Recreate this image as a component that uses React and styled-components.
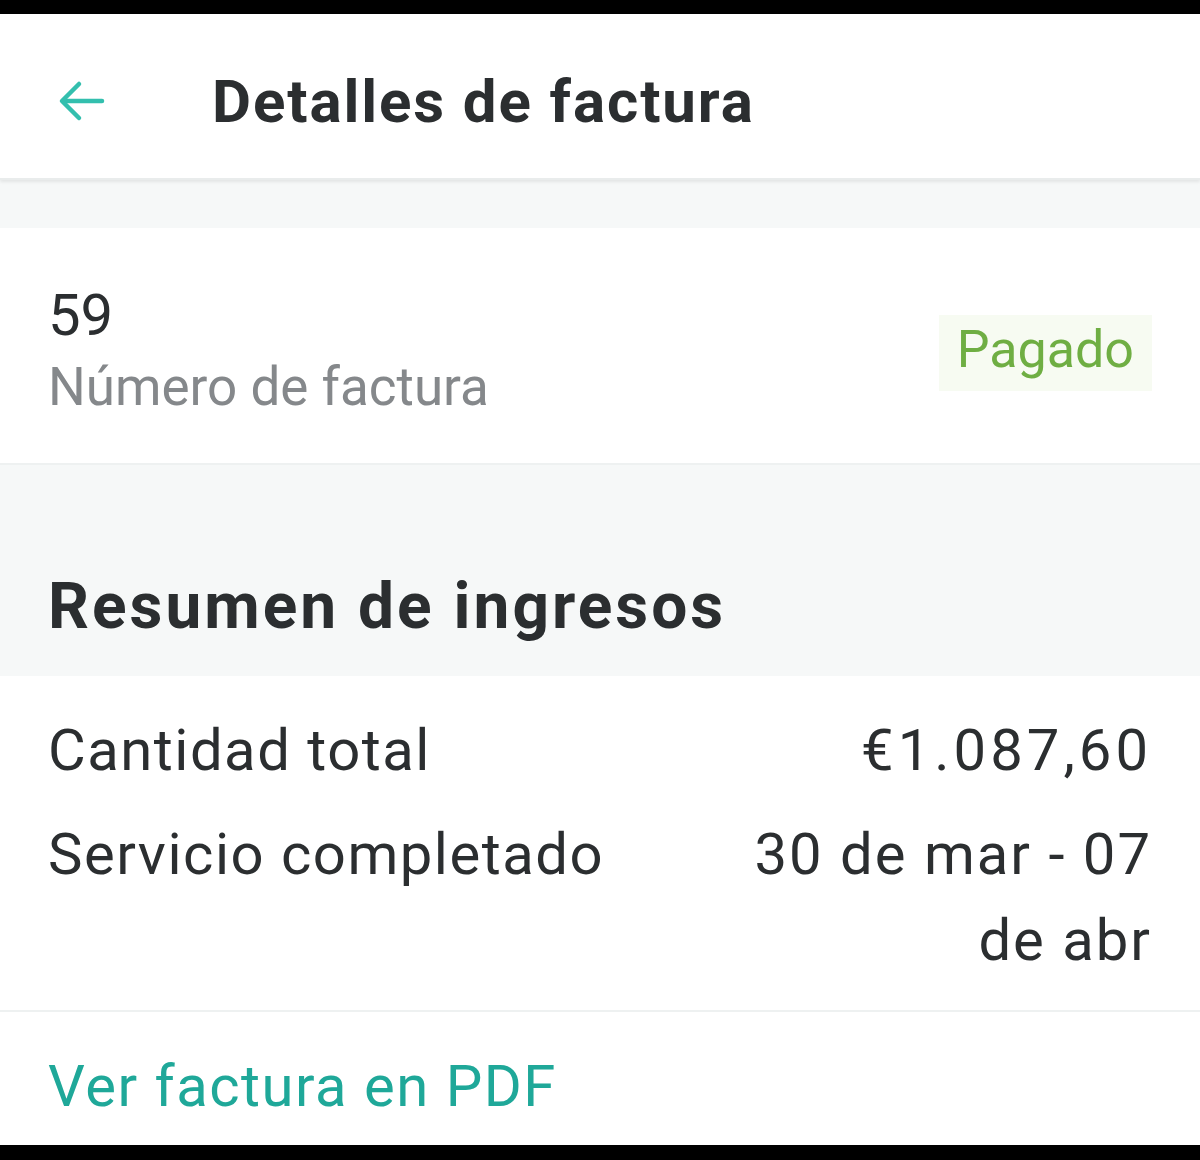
import React from "react"
import styled, { createGlobalStyle } from "styled-components"

const GlobalStyle = createGlobalStyle`
    html, body {
        margin: 0;
        padding: 0;
        background: #000;
    }
    body {
        font-family: Roboto, "Noto Sans", "Liberation Sans", sans-serif;
        -webkit-font-smoothing: antialiased;
    }
`;

const Frame = styled.div`
    width: 1200px;
    height: 1160px;
    background: #000;
    padding: 14px 0 15px;
    box-sizing: border-box;
`;

const Screen = styled.div`
    height: 100%;
    background: #fff;
    display: flex;
    flex-direction: column;
    overflow: hidden;
`;

//Cabecera
const Header = styled.header`
    height: 166px;
    flex-shrink: 0;
    display: flex;
    align-items: center;
    padding: 10px 48px 0 56px;
    background: #fff;
    box-shadow: 0 2px 3px rgba(0, 0, 0, 0.08);
    border-bottom: 2px solid #e9ecec;
    box-sizing: border-box;
    position: relative;
    z-index: 1;
`;

const BackButton = styled.button`
    border: none;
    background: none;
    padding: 0;
    width: 52px;
    height: 52px;
    display: flex;
    align-items: center;
    justify-content: center;
    color: #33bfae;
    margin-right: 104px;
`;

const Title = styled.h1`
    margin: 0;
    font-size: 60px;
    font-weight: 700;
    color: #2b2e30;
    letter-spacing: 1.9px;
`;

const Spacer = styled.div`
    height: ${({ $h }) => $h}px;
    flex-shrink: 0;
    background: #f6f8f8;
`;

//Tarjeta del número
const InvoiceCard = styled.section`
    height: 237px;
    flex-shrink: 0;
    display: flex;
    align-items: center;
    justify-content: space-between;
    padding: 10px 48px 0;
    box-sizing: border-box;
    border-bottom: 2px solid #eef1f1;
`;

const NumberBlock = styled.div`
    display: flex;
    flex-direction: column;
`;

const InvoiceNumber = styled.span`
    font-size: 58px;
    line-height: 72px;
    color: #2b2e30;
`;

const InvoiceLabel = styled.span`
    font-size: 53px;
    line-height: 72px;
    color: #85888b;
`;

const Status = styled.span`
    font-size: 52px;
    line-height: 66px;
    color: #6fae43;
    background: #f7fbf2;
    padding: 2px 18px 8px;
    margin-top: 4px;
`;

//Resumen
const SummaryHeading = styled.div`
    height: 211px;
    flex-shrink: 0;
    background: #f6f8f8;
    display: flex;
    align-items: flex-end;
    padding: 0 48px 32px;
    box-sizing: border-box;
`;

const SectionTitle = styled.h2`
    margin: 0;
    font-size: 64px;
    font-weight: 700;
    color: #2b2e30;
    letter-spacing: 3px;
`;

const Details = styled.section`
    height: 336px;
    flex-shrink: 0;
    padding: 31px 48px 0;
    box-sizing: border-box;
    border-bottom: 2px solid #eef1f1;
    display: flex;
    flex-direction: column;
`;

const Row = styled.div`
    display: flex;
    justify-content: space-between;
    align-items: flex-start;
    gap: 40px;
    font-size: 58px;
    line-height: 86px;
    letter-spacing: 1.5px;
    margin-bottom: 18px;
    color: #2b2e30;
`;

const RowLabel = styled.span`
    flex-shrink: 0;
`;

const RowValue = styled.span`
    text-align: right;
    max-width: 420px;
    letter-spacing: ${({ $wide }) => ($wide ? "4px" : "2px")};
`;

const Footer = styled.div`
    flex: 1;
    display: flex;
    align-items: center;
    padding: 14px 48px 0;
`;

const PdfLink = styled.a`
    font-size: 58px;
    letter-spacing: 1.5px;
    color: #1fa899;
    text-decoration: none;
`;

const ArrowIcon = () => (
    <svg width="48" height="42" viewBox="0 0 48 42" fill="none" stroke="currentColor" strokeWidth="4.5" strokeLinecap="round" strokeLinejoin="round">
        <path d="M44 21H5" />
        <path d="M21 4L4 21l17 17" />
    </svg>
);

const rows = [
    { label: "Cantidad total", value: "€1.087,60", wide: true },
    { label: "Servicio completado", value: "30 de mar - 07 de abr" },
];

export default function App() {
    return (
        <Frame>
            <GlobalStyle />
            <Screen>
                <Header>
                    <BackButton aria-label="Volver">
                        <ArrowIcon />
                    </BackButton>
                    <Title>Detalles de factura</Title>
                </Header>
                <Spacer $h={48} />
                <InvoiceCard>
                    <NumberBlock>
                        <InvoiceNumber>59</InvoiceNumber>
                        <InvoiceLabel>Número de factura</InvoiceLabel>
                    </NumberBlock>
                    <Status>Pagado</Status>
                </InvoiceCard>
                <SummaryHeading>
                    <SectionTitle>Resumen de ingresos</SectionTitle>
                </SummaryHeading>
                <Details>
                    {rows.map((r) => (
                        <Row key={r.label}>
                            <RowLabel>{r.label}</RowLabel>
                            <RowValue $wide={r.wide}>{r.value}</RowValue>
                        </Row>
                    ))}
                </Details>
                <Footer>
                    <PdfLink href="#">Ver factura en PDF</PdfLink>
                </Footer>
            </Screen>
        </Frame>
    );
}
